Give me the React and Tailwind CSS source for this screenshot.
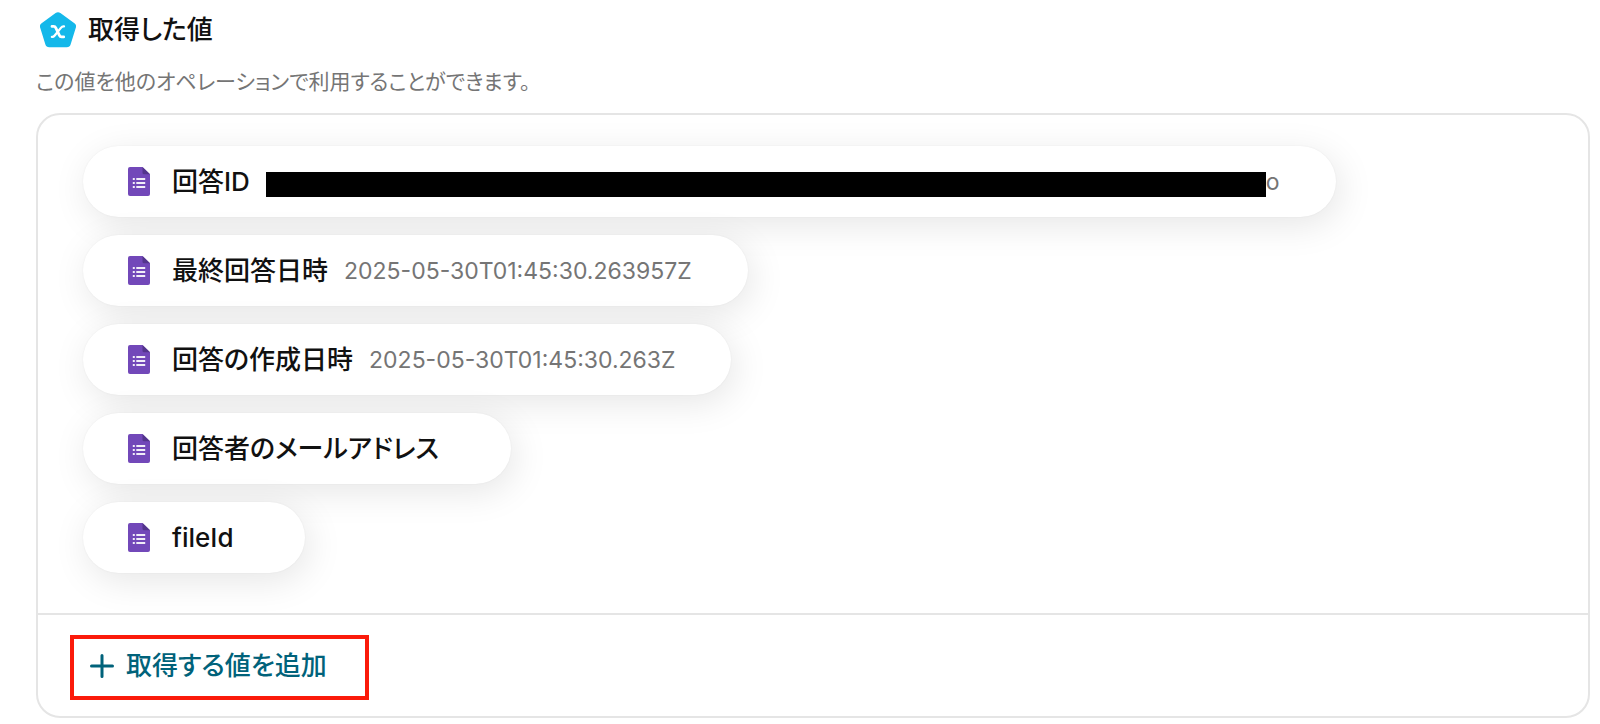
import React from "react";

const values = [
  { label: "回答ID", value: "o", masked: true },
  { label: "最終回答日時", value: "2025-05-30T01:45:30.263957Z" },
  { label: "回答の作成日時", value: "2025-05-30T01:45:30.263Z" },
  { label: "回答者のメールアドレス" },
  { label: "fileId" },
];

function ValueBadge() {
  return (
    <svg className="h-9 w-9 shrink-0" viewBox="0 0 36 36" aria-hidden="true">
      <path
        d="M15.6 1.1a4 4 0 0 1 4.8 0l14 10.2a4 4 0 0 1 1.4 4.500L30.600 32.500a4 4 0 0 1-3.800 2.800H9.200a4 4 0 0 1-3.800-2.800L.2 15.800a4 4 0 0 1 1.400-4.500z"
        fill="#14b8ea"
      />
      <g fill="none" stroke="#fff" strokeLinecap="round" strokeLinejoin="round">
        <path d="M12 14.400h1.800c1 0 1.500.4 2 1.400l3.600 7.600c.5 1.100 1.100 1.500 2.100 1.500h2.200" strokeWidth="2.800" />
        <path d="M24 14.400h-.6c-1.100 0-1.700.5-2.500 1.500l-6.200 7.500c-.8 1-1.400 1.500-2.400 1.500h-.4" strokeWidth="2.300" />
      </g>
    </svg>
  );
}

function FormIcon() {
  return (
    <svg className="h-[29px] w-[22px] shrink-0" viewBox="0 0 22 29" aria-hidden="true">
      <path d="M2 0h12.500L22 7.200V27a2 2 0 0 1-2 2H2a2 2 0 0 1-2-2V2a2 2 0 0 1 2-2z" fill="#7248b9" />
      <path d="M14.500 0 22 7.200h-6a1.500 1.500 0 0 1-1.500-1.500z" fill="#53358c" />
      <path
        d="M4.800 11h2v2h-2zM8.300 11h8.900v2H8.300zM4.800 15h2v2h-2zM8.300 15h8.900v2H8.300zM4.800 19h2v2h-2zM8.300 19h8.900v2H8.300z"
        fill="#f1edf8"
      />
    </svg>
  );
}

function ValueChip({ label, value, masked }) {
  return (
    <li
      className={`flex h-[71px] items-center rounded-full bg-white pl-[45px] shadow-[0_0_2px_rgba(0,0,0,0.06),4px_8px_36px_rgba(0,0,0,0.1)] ${
        value ? "pr-14" : "pr-18"
      }`}
    >
      <FormIcon />
      <span className="ml-[22px] text-[26px] leading-9 font-medium text-[#111]">{label}</span>
      {value && (
        <span className="ml-4 flex items-center text-[23px] leading-8 text-[#757575]">
          {masked && <span className="mt-1.5 h-[25px] w-[1000px] bg-black" />}
          {value}
        </span>
      )}
    </li>
  );
}

export default function App() {
  return (
    <main className="bg-white pt-3 pr-[10px] pb-1 pl-9 font-[Inter,'Noto_Sans_CJK_JP',sans-serif] [font-feature-settings:'palt']">
      <header>
        <div className="flex h-9 items-center gap-3 pl-1">
          <ValueBadge />
          <h1 className="text-[26px] leading-9 font-medium text-[#111]">取得した値</h1>
        </div>
        <p className="mt-[18px] text-[21px] leading-8 text-[#757575]">
          この値を他のオペレーションで利用することができます。
        </p>
      </header>
      <section className="mt-[15px] rounded-3xl border-2 border-[#e5e5e5]">
        <ul className="flex flex-col items-start gap-[18px] px-[45px] pt-[31px] pb-10">
          {values.map((item) => (
            <ValueChip key={item.label} {...item} />
          ))}
        </ul>
        <div className="border-t-2 border-[#e5e5e5] px-8 pt-5 pb-4">
          <button
            type="button"
            className="flex h-[65px] w-[299px] cursor-pointer items-center gap-3 border-4 border-[#fb1a0a] pb-1 pl-4 text-[26px] leading-9 font-medium text-[#00627a]"
          >
            <svg className="h-6 w-6 shrink-0" viewBox="0 0 24 24" aria-hidden="true">
              <path d="M12 1.500v21M1.500 12h21" stroke="currentColor" strokeWidth="3" strokeLinecap="round" />
            </svg>
            取得する値を追加
          </button>
        </div>
      </section>
    </main>
  );
}
